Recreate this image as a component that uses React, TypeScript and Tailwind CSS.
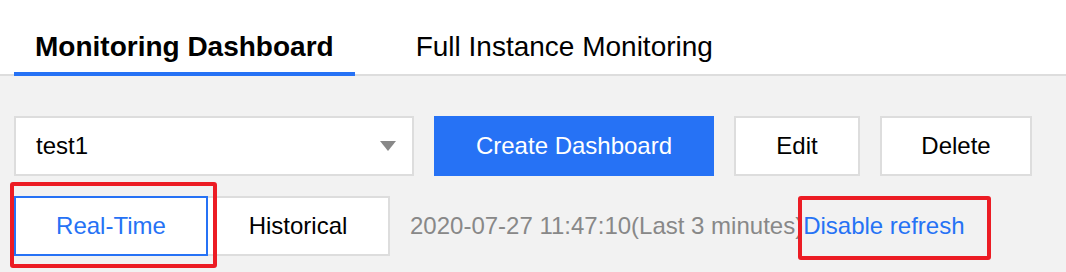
import React from 'react';

const FONT = { fontFamily: '"Liberation Sans", Arial, Helvetica, sans-serif' };

export default function App() {
  return (
    <div className="relative w-[1066px] h-[272px] bg-[#f2f2f2] overflow-hidden" style={FONT}>
      {/* Tabs */}
      <div className="flex h-[76px] bg-white border-b-2 border-[#dddddd] pl-[14px]">
        <div className="h-[76px] -mb-[2px] px-[21px] pt-[33px] border-b-4 border-[#2672f5] text-[28px] leading-[28px] font-bold text-black">
          Monitoring Dashboard
        </div>
        <div className="h-[76px] -mb-[2px] ml-[40px] px-[21px] pt-[33px] text-[28px] leading-[28px] text-black">
          Full Instance Monitoring
        </div>
      </div>

      {/* Dashboard controls */}
      <div className="flex gap-[20px] pl-[14px] pt-[40px]">
        <div className="flex items-center justify-between w-[400px] h-[60px] bg-white border-2 border-[#dddddd] pl-[20px] pr-[16px] text-[24px] text-black">
          <span>test1</span>
          <svg width="16" height="10" viewBox="0 0 16 10">
            <path d="M0 0 L16 0 L8 10 Z" fill="#888888" />
          </svg>
        </div>
        <button className="w-[280px] h-[60px] bg-[#2672f5] text-white text-[24px]">
          Create Dashboard
        </button>
        <button className="w-[126px] h-[60px] bg-white border-2 border-[#dddddd] text-black text-[24px]">
          Edit
        </button>
        <button className="w-[152px] h-[60px] bg-white border-2 border-[#dddddd] text-black text-[24px]">
          Delete
        </button>
      </div>

      {/* Time range */}
      <div className="flex items-center pl-[14px] pt-[20px]">
        <button className="w-[194px] h-[60px] bg-white border-2 border-[#2672f5] text-[#2672f5] text-[24px]">
          Real-Time
        </button>
        <button className="w-[182px] h-[60px] bg-white border-2 border-l-0 border-[#dddddd] text-black text-[24px]">
          Historical
        </button>
        <span className="ml-[20px] text-[24px] text-[#888888]">
          2020-07-27 11:47:10(Last 3 minutes)
        </span>
        <span className="text-[24px] text-[#2672f5]">Disable refresh</span>
      </div>

      {/* Annotation boxes */}
      <div className="absolute left-[10px] top-[182px] w-[207px] h-[86px] border-4 border-[#ec1c24] rounded-[3px]" />
      <div className="absolute left-[798px] top-[196px] w-[193px] h-[64px] border-4 border-[#ec1c24] rounded-[3px]" />
    </div>
  );
}
